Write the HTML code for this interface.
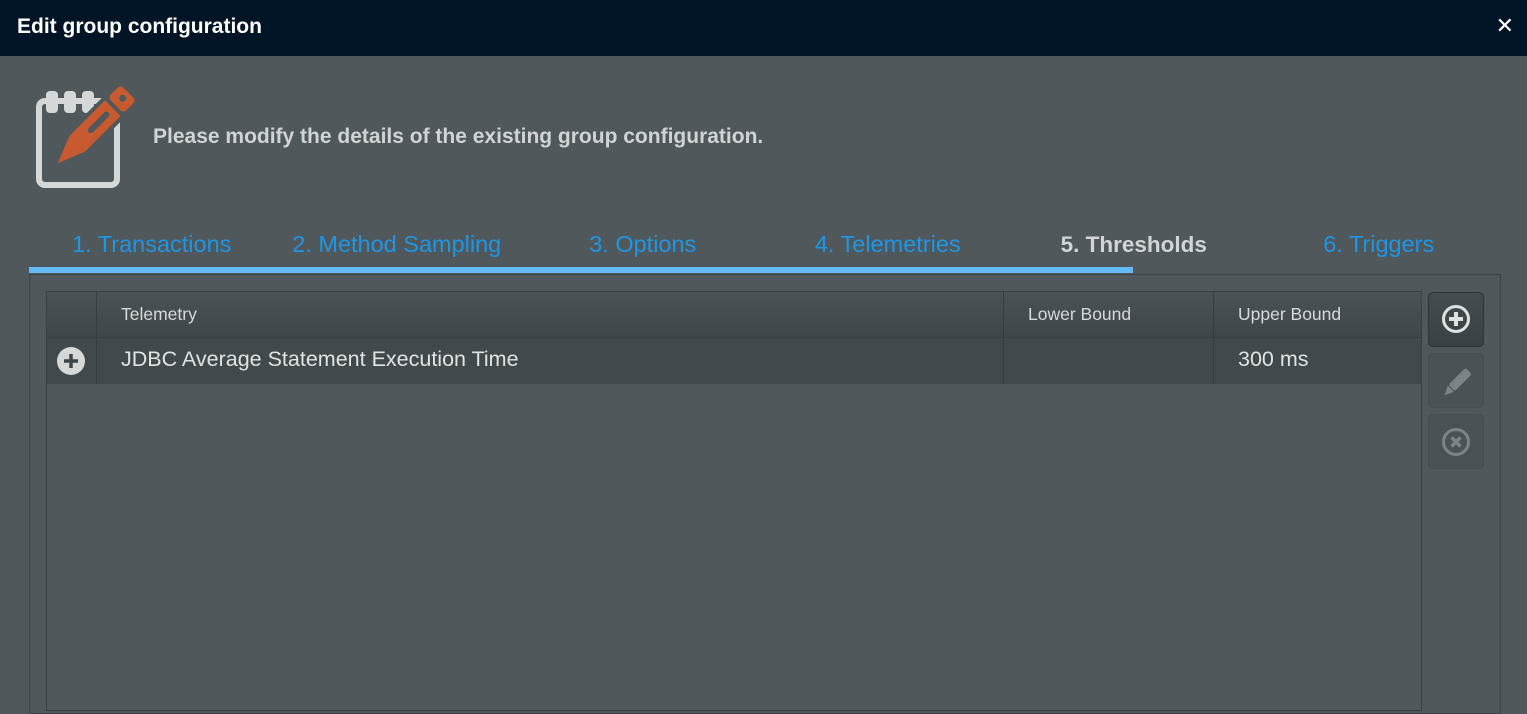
<!DOCTYPE html>
<html><head><style>
*{margin:0;padding:0;box-sizing:border-box}
body{width:1527px;height:700px;overflow:hidden;background:#50585b;font-family:"Liberation Sans","DejaVu Sans",sans-serif;position:relative}
.hdr{position:absolute;left:0;top:0;width:1527px;height:56px;background:#011526;color:#fff;font-weight:bold;font-size:21px;padding:15px 0 0 17px}
.x{position:absolute;right:13px;top:13px;color:#fff;font-size:22px;font-weight:bold}
.msg{position:absolute;left:153px;top:125px;color:#d0d4d6;font-weight:bold;font-size:21px}
.tab{position:absolute;top:231px;width:245.5px;text-align:center;font-size:23.5px;color:#1e96e6}
.tab.a{color:#d2d5d7;font-weight:bold;font-size:22.5px;top:232px}
.bar{position:absolute;left:29px;top:267px;width:1104px;height:6px;background:#64bbf5}
.panel{position:absolute;left:29px;top:274px;width:1472px;height:440px;border:1px solid #3b4245}
.tbl{position:absolute;left:46px;top:291px;width:1376px;height:420px;border:1px solid #394043;background:#50585b}
.hrow{position:absolute;left:0;top:0;width:100%;height:46px;background:linear-gradient(#4b5255,#40474a);border-bottom:1px solid #394043;color:#d6d9db;font-size:17.5px}
.row{position:absolute;left:0;top:46px;width:100%;height:46px;background:#42494c;color:#e0e3e4;font-size:21.5px}
.c{position:absolute;top:0;height:100%;border-left:1px solid #363d40}
.t{position:absolute;top:12px;white-space:nowrap}
.btn{position:absolute;left:1428px;width:56px;height:55px;border-radius:5px;background:#4a5255;border:1px solid #464e51}
.btn.p{background:linear-gradient(#454c4f,#3a4144);border:1px solid #2e3436}
</style></head><body>
<div class="hdr">Edit group configuration</div><div class="x">✕</div>
<svg style="position:absolute;left:0;top:0" width="150" height="200" viewBox="0 0 150 200">
<rect x="39" y="101" width="78" height="84" rx="6" fill="none" stroke="#d4d8d9" stroke-width="6"/>
<rect x="46" y="91" width="12" height="22" rx="4" fill="#d4d8d9"/>
<rect x="64" y="91" width="12" height="22" rx="4" fill="#d4d8d9"/>
<rect x="82" y="91" width="12" height="22" rx="4" fill="#d4d8d9"/>
<g transform="rotate(45 93 128)">
<path d="M82 82a4 4 0 0 1 4-4h14a4 4 0 0 1 4 4v68l-11 28l-11-28z" fill="#50585b" stroke="#50585b" stroke-width="8"/>
<rect x="82" y="78" width="22" height="18" rx="4" fill="#c85a30"/>
<rect x="82" y="100" width="22" height="50" fill="#c85a30"/>
<polygon points="82,150 104,150 93,178" fill="#c85a30"/>
<rect x="90" y="106" width="6" height="28" rx="3" fill="#50585b"/>
<circle cx="93" cy="86" r="3.5" fill="#50585b"/>
</g></svg>
<div class="msg">Please modify the details of the existing group configuration.</div>
<div class="tab" style="left:29px">1. Transactions</div>
<div class="tab" style="left:274px">2. Method Sampling</div>
<div class="tab" style="left:520px">3. Options</div>
<div class="tab" style="left:765px">4. Telemetries</div>
<div class="tab a" style="left:1011px">5. Thresholds</div>
<div class="tab" style="left:1256px">6. Triggers</div>
<div class="bar"></div>
<div class="panel"></div>
<div class="tbl">
<div class="hrow">
<div class="c" style="left:49px"><span class="t" style="left:24px">Telemetry</span></div>
<div class="c" style="left:956px"><span class="t" style="left:24px">Lower Bound</span></div>
<div class="c" style="left:1166px"><span class="t" style="left:24px">Upper Bound</span></div>
</div>
<div class="row">
<svg style="position:absolute;left:10px;top:9px" width="28" height="28"><circle cx="14" cy="14" r="14" fill="#d4d8d9"/><path d="M14 7v14M7 14h14" stroke="#3e4548" stroke-width="3.5"/></svg>
<div class="c" style="left:49px"><span class="t" style="left:24px;top:9px">JDBC Average Statement Execution Time</span></div>
<div class="c" style="left:956px"></div>
<div class="c" style="left:1166px"><span class="t" style="left:24px;top:9px">300 ms</span></div>
</div>
</div>
<div class="btn p" style="top:292px"><svg style="position:absolute;left:12px;top:11px" width="30" height="30"><circle cx="15" cy="15" r="12.5" fill="none" stroke="#dfe2e3" stroke-width="3"/><path d="M15 8v14M8 15h14" stroke="#dfe2e3" stroke-width="4"/></svg></div>
<div class="btn" style="top:353px"><svg style="position:absolute;left:12px;top:12px" width="32" height="32"><g transform="rotate(45 16 16)"><rect x="12" y="0" width="9" height="24" rx="2" fill="#7c8487"/><polygon points="12,25 21,25 16.5,34" fill="#7c8487"/></g></svg></div>
<div class="btn" style="top:414px"><svg style="position:absolute;left:12px;top:12px" width="30" height="30"><circle cx="15" cy="15" r="12.5" fill="none" stroke="#7c8487" stroke-width="3"/><path d="M10.5 10.5l9 9M19.5 10.5l-9 9" stroke="#7c8487" stroke-width="3.5"/></svg></div>
</body></html>
